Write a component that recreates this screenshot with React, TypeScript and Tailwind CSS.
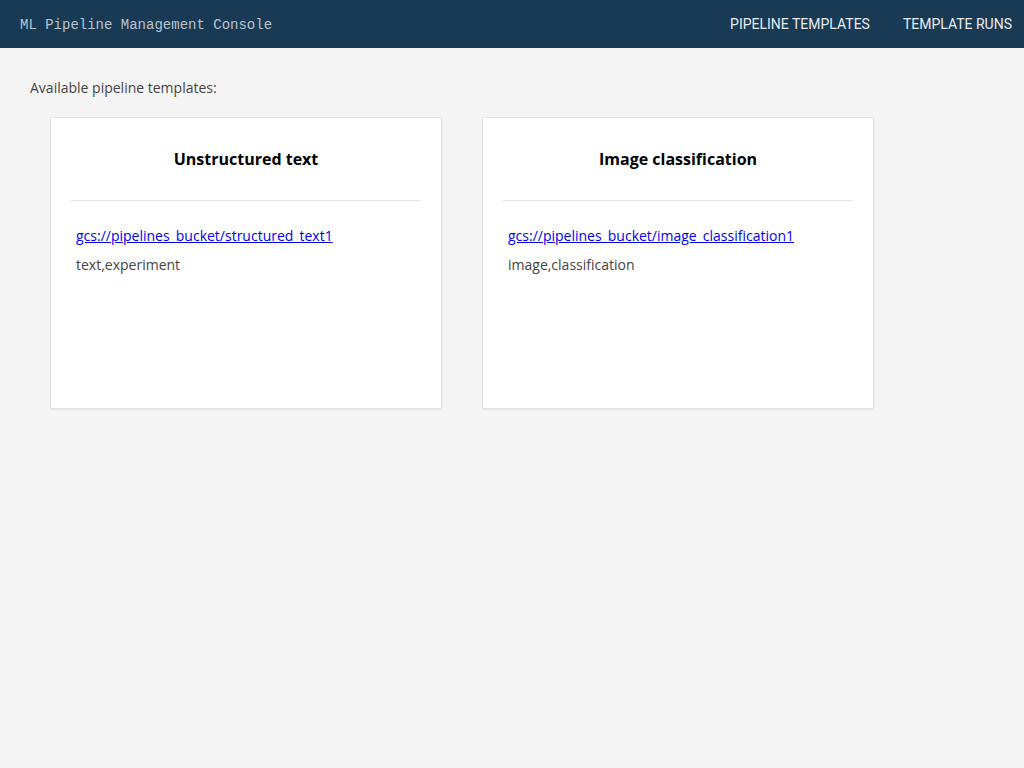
const templates = [
  {
    name: 'Unstructured text',
    location: 'gcs://pipelines_bucket/structured_text1',
    tags: 'text,experiment',
  },
  {
    name: 'Image classification',
    location: 'gcs://pipelines_bucket/image_classification1',
    tags: 'image,classification',
  },
];

export default function App() {
  return (
    <div className="min-h-screen bg-[#f5f5f5] font-['Open_Sans',sans-serif]">
      {/* Top bar */}
      <header className="h-12 bg-[#193a55] flex items-center justify-between pl-5 pr-3">
        <div className="font-['Liberation_Mono',monospace] text-[14px] text-[#b9c3cc] pt-[2px]">
          ML Pipeline Management Console
        </div>
        <nav className="flex items-center gap-[33px] font-['Roboto',sans-serif] text-[14px] text-[#e8edf1]">
          <a className="cursor-pointer">PIPELINE TEMPLATES</a>
          <a className="cursor-pointer">TEMPLATE RUNS</a>
        </nav>
      </header>

      <main className="pt-[30px] px-[30px]">
        <p className="text-[14px] text-[#444] leading-5">Available pipeline templates:</p>

        <div className="flex gap-10 mt-[19px] ml-5">
          {templates.map(t => (
            <div
              key={t.name}
              className="w-[392px] h-[292px] bg-white border border-[#e2e2e2] rounded-[2px] shadow-[0_1px_2px_rgba(0,0,0,0.08)] px-5"
            >
              <h2 className="text-[16px] font-bold text-black text-center pt-[29px] h-[83px] border-b border-[#e4e4e4]">
                {t.name}
              </h2>
              <div className="px-[5px] pt-[25px]">
                <a className="block text-[14px] leading-[20px] text-[#0000ee] underline cursor-pointer">
                  {t.location}
                </a>
                <p className="text-[14px] leading-[20px] text-[#444] mt-[9px]">{t.tags}</p>
              </div>
            </div>
          ))}
        </div>
      </main>
    </div>
  );
}
